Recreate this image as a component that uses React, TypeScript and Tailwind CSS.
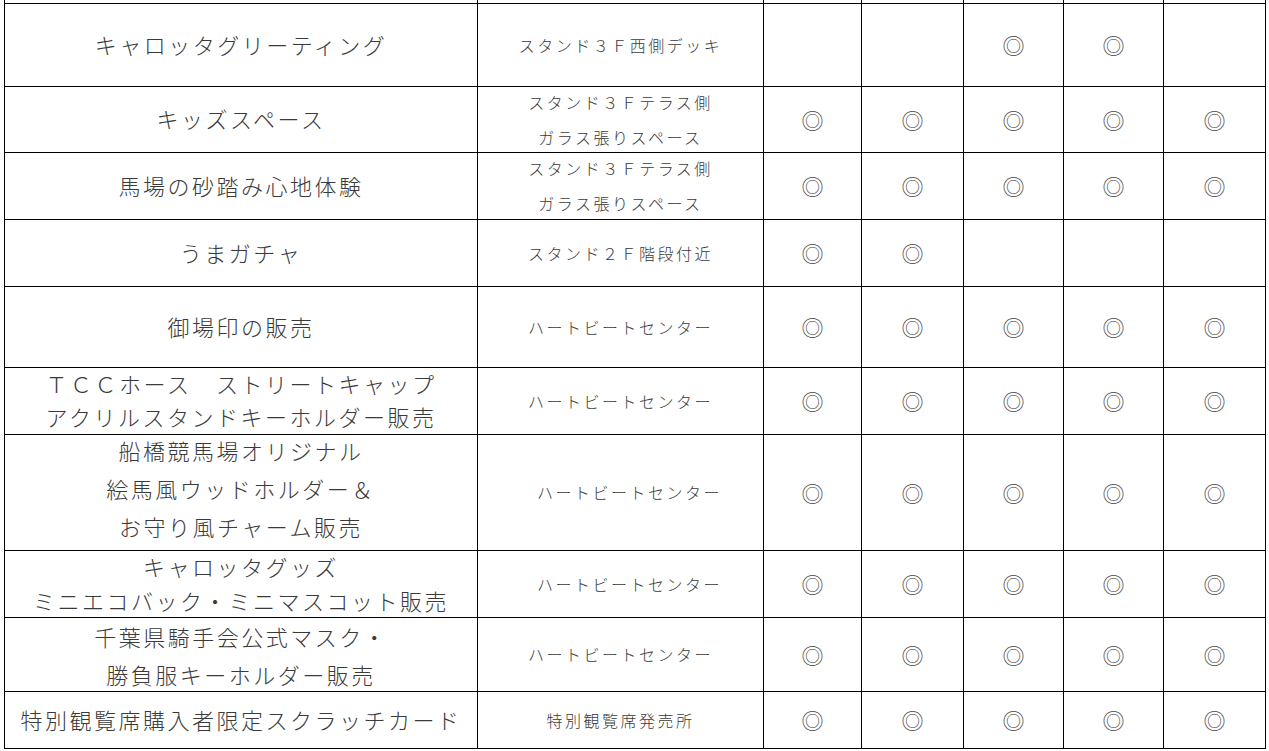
const rows = [
  {
    h: "h-[83px]",
    name: "キャロッタグリーティング",
    nameLead: "leading-[34px]",
    place: "スタンド３Ｆ西側デッキ",
    placeCls: "",
    marks: [false, false, true, true, false],
  },
  {
    h: "h-[66px]",
    name: "キッズスペース",
    nameLead: "leading-[34px]",
    place: "スタンド３Ｆテラス側\nガラス張りスペース",
    placeCls: "",
    marks: [true, true, true, true, true],
  },
  {
    h: "h-[67px]",
    name: "馬場の砂踏み心地体験",
    nameLead: "leading-[34px]",
    place: "スタンド３Ｆテラス側\nガラス張りスペース",
    placeCls: "",
    marks: [true, true, true, true, true],
  },
  {
    h: "h-[67px]",
    name: "うまガチャ",
    nameLead: "leading-[34px]",
    place: "スタンド２Ｆ階段付近",
    placeCls: "",
    marks: [true, true, false, false, false],
  },
  {
    h: "h-[81px]",
    name: "御場印の販売",
    nameLead: "leading-[34px]",
    place: "ハートビートセンター",
    placeCls: "",
    marks: [true, true, true, true, true],
  },
  {
    h: "h-[67px]",
    name: "ＴＣＣホース　ストリートキャップ\nアクリルスタンドキーホルダー販売",
    nameLead: "leading-[33px]",
    place: "ハートビートセンター",
    placeCls: "",
    marks: [true, true, true, true, true],
  },
  {
    h: "h-[116px]",
    name: "船橋競馬場オリジナル\n絵馬風ウッドホルダー＆\nお守り風チャーム販売",
    nameLead: "leading-[38px] -mt-[6px]",
    place: "ハートビートセンター",
    placeCls: "pl-[18px]",
    marks: [true, true, true, true, true],
  },
  {
    h: "h-[67px]",
    name: "キャロッタグッズ\nミニエコバック・ミニマスコット販売",
    nameLead: "leading-[34px]",
    place: "ハートビートセンター",
    placeCls: "pl-[18px]",
    marks: [true, true, true, true, true],
  },
  {
    h: "h-[74px]",
    name: "千葉県騎手会公式マスク・\n勝負服キーホルダー販売",
    nameLead: "leading-[38px] mt-[4px]",
    place: "ハートビートセンター",
    placeCls: "",
    marks: [true, true, true, true, true],
  },
  {
    h: "h-[57px]",
    name: "特別観覧席購入者限定スクラッチカード",
    nameLead: "leading-[34px]",
    place: "特別観覧席発売所",
    placeCls: "text-[15px]",
    marks: [true, true, true, true, true],
  },
];

const markCols = ["w-[98px]", "w-[102px]", "w-[100px]", "w-[100px]", "w-[102px]"];

const cell = "border-r border-b border-black flex items-center justify-center text-center";

export default function App() {
  return (
    <div
      className="w-[1269px] h-[751px] overflow-hidden bg-white text-[#3a3a3a]"
      style={{ fontFamily: '"Noto Sans CJK JP", "Noto Sans", sans-serif' }}
    >
      <div className="ml-[4px] w-[1262px] border-l border-black">
        <div className="flex h-[4px]">
          <div className={`${cell} w-[473px]`} />
          <div className={`${cell} w-[286px]`} />
          {markCols.map((w, i) => (
            <div key={i} className={`${cell} ${w}`} />
          ))}
        </div>
        {rows.map((r, ri) => (
          <div key={ri} className={`flex ${r.h}`}>
            <div className={`${cell} w-[473px] pb-[3px]`}>
              <div className={`whitespace-pre-line text-[22px] tracking-[2.5px] font-light ${r.nameLead}`}>
                {r.name}
              </div>
            </div>
            <div className={`${cell} w-[286px]`}>
              <div className={`whitespace-pre-line text-[16px] tracking-[2.5px] leading-[35px] font-light ${r.placeCls}`}>
                {r.place}
              </div>
            </div>
            {markCols.map((w, i) => (
              <div key={i} className={`${cell} ${w} pb-[2px]`}>
                {r.marks[i] && <span className="text-[22px] leading-none font-light text-[#444]">◎</span>}
              </div>
            ))}
          </div>
        ))}
      </div>
    </div>
  );
}
